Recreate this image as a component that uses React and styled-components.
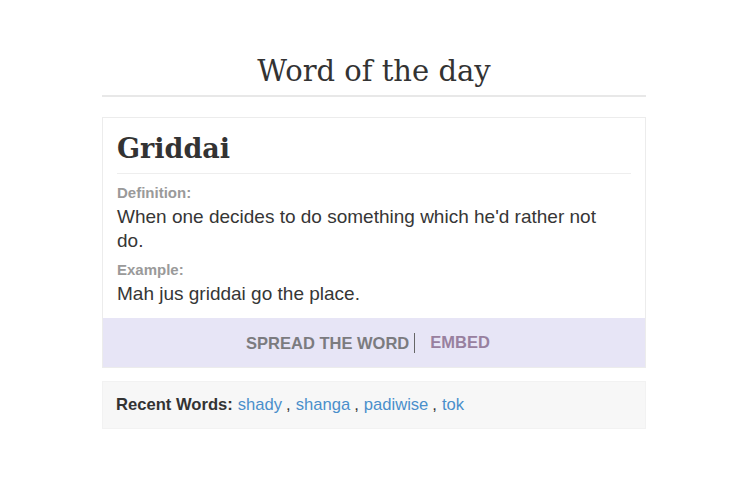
import React from "react";
import styled, { createGlobalStyle } from "styled-components";

const Global = createGlobalStyle`
  html, body { margin: 0; padding: 0; background: #fff; }
  body { font-family: "Liberation Sans", Arial, sans-serif; color: #333; }
`;

const Page = styled.div`
  width: 544px;
  margin-left: 102px;
  padding-top: 53px;
`;

const Title = styled.h1`
  margin: 0;
  font-family: "DejaVu Serif", serif;
  font-weight: normal;
  font-size: 29px;
  line-height: 36px;
  color: #333;
  text-align: center;
  padding-bottom: 6px;
  border-bottom: 2px solid #e8e8e8;
`;

const Card = styled.section`
  margin-top: 20px;
  border: 1px solid #ececec;
  background: #fff;
`;

const Body = styled.div`
  padding: 15px 14px 12px;
`;

const Word = styled.h2`
  margin: 0;
  font-family: "DejaVu Serif", serif;
  font-weight: bold;
  font-size: 27px;
  line-height: 32px;
  color: #333;
  padding-bottom: 8px;
  border-bottom: 1px solid #eeeeee;
`;

const Label = styled.div`
  font-size: 15px;
  line-height: 18px;
  font-weight: bold;
  color: #9a9a9a;
  margin-top: ${(p) => p.$top}px;
`;

const Text = styled.p`
  margin: 3px 0 0;
  padding-right: 14px;
  font-size: 19px;
  line-height: 24px;
  color: #363636;
`;

const ShareBar = styled.div`
  height: 49px;
  background: #e7e5f6;
  display: flex;
  align-items: center;
  justify-content: center;
  padding-right: 12px;
  font-size: 16.5px;
  font-weight: bold;
`;

const Spread = styled.span`
  color: #7b7b7f;
  padding-right: 5px;
  margin-right: 15px;
  border-right: 1px solid #666;
  line-height: 20px;
`;

const Embed = styled.span`
  color: #98809f;
`;

const Recent = styled.div`
  margin-top: 13px;
  height: 48px;
  background: #f7f7f7;
  border: 1px solid #f2f2f2;
  box-sizing: border-box;
  display: flex;
  align-items: center;
  padding-left: 13px;
  font-size: 16.6px;
  color: #333;
`;

const RecentLabel = styled.b`
  margin-right: 5px;
`;

const Link = styled.a`
  color: #4a8fcb;
  text-decoration: none;
`;

const Sep = styled.span`
  margin: 0 5px 0 4px;
`;

const recent = ["shady", "shanga", "padiwise", "tok"];

export default function App() {
  return (
    <>
      <Global />
      <Page>
        <Title>Word of the day</Title>
        <Card>
          <Body>
            <Word>Griddai</Word>
            <Label $top={10}>Definition:</Label>
            <Text>When one decides to do something which he'd rather not do.</Text>
            <Label $top={8}>Example:</Label>
            <Text>Mah jus griddai go the place.</Text>
          </Body>
          <ShareBar>
            <Spread>SPREAD THE WORD</Spread>
            <Embed>EMBED</Embed>
          </ShareBar>
        </Card>
        <Recent>
          <RecentLabel>Recent Words:</RecentLabel>
          {recent.map((w, i) => (
            <React.Fragment key={w}>
              <Link href="#">{w}</Link>
              {i < recent.length - 1 && <Sep>,</Sep>}
            </React.Fragment>
          ))}
        </Recent>
      </Page>
    </>
  );
}
